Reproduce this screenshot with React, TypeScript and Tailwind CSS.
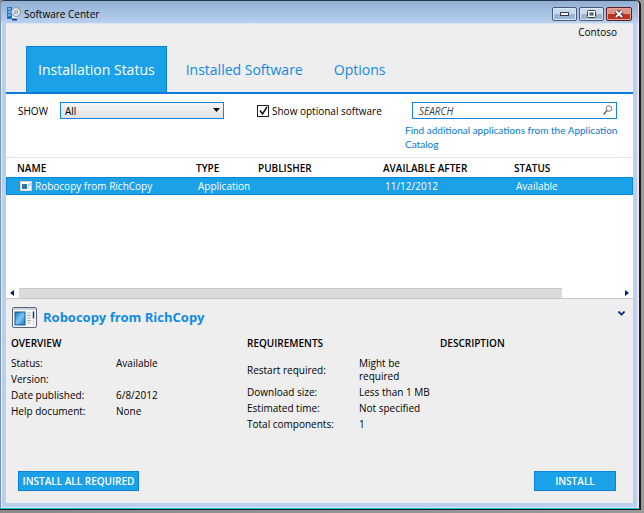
import React from "react";

const TABS = ["Installed Software", "Options"];

const OVERVIEW = [
  ["Status:", "Available"],
  ["Version:", ""],
  ["Date published:", "6/8/2012"],
  ["Help document:", "None"],
];

const REQUIREMENTS = [
  ["Restart required:", "Might be required"],
  ["Download size:", "Less than 1 MB"],
  ["Estimated time:", "Not specified"],
  ["Total components:", "1"],
];

const AppLogo: React.FC = () => (
  <svg width="14" height="14" viewBox="0 0 14 14" aria-hidden="true">
    <rect x="0" y="0" width="5" height="12" fill="#1675d1" />
    <path d="M1 2h3M1 5h3M1 8h3" stroke="#bfe4ff" />
    <rect x="5" y="7" width="5" height="6" fill="#f4f8fc" />
    <path d="M5 12.500h5" stroke="#163f97" strokeWidth="2" />
    <circle cx="9" cy="5" r="4.500" fill="#dce3ea" stroke="#8793a5" />
    <circle cx="9" cy="5" r="1.500" fill="#fff" stroke="#8b96a8" />
    <path d="M6 8l3-3 2-3" stroke="#d4b994" fill="none" />
  </svg>
);

const ProgramIcon: React.FC = () => (
  <svg width="25" height="21" viewBox="0 0 25 21" aria-hidden="true">
    <defs>
      <linearGradient id="pane" x1="0" y1="0" x2="1" y2="1">
        <stop offset="0" stopColor="#1677bd" />
        <stop offset="0.500" stopColor="#7dc6ee" />
        <stop offset="1" stopColor="#1676c0" />
      </linearGradient>
    </defs>
    <rect x="0.500" y="0.500" width="24" height="20" rx="1.500" fill="#fafbfd" stroke="#59647a" />
    <path d="M1 2h23" stroke="#cbd3df" strokeWidth="2" />
    <rect x="3" y="5" width="10" height="13" fill="url(#pane)" stroke="#17569a" />
    <path d="M15 6h4M15 8.500h4M15 11h4M15 13.500h4M15 16h4" stroke="#a9adb5" />
    <path d="M21.500 4.500v7" stroke="#1c376f" strokeWidth="1.500" />
    <path d="M21.500 13v5" stroke="#cbd0d8" />
  </svg>
);

const RowIcon: React.FC = () => (
  <svg width="12" height="10" viewBox="0 0 12 10" aria-hidden="true">
    <rect x="0.500" y="0.500" width="11" height="9" fill="#fff" stroke="#e9cdb8" />
    <rect x="2" y="3" width="5" height="5" fill="#2874bd" />
    <path d="M8.500 3v5" stroke="#d5d5dc" />
    <path d="M10 2v3" stroke="#8ea3c4" />
  </svg>
);

const TitleBar: React.FC = () => (
  <header className="flex h-[22px] shrink-0 items-start justify-between rounded-t-[4px] bg-linear-to-b from-[#91afd3] to-[#b9d0ee] pl-[6px] pr-[6px]">
    <div className="flex items-center gap-[3px] pt-[5px]">
      <AppLogo />
      <h1 className="text-[10px] leading-4 text-black">Software Center</h1>
    </div>
    <div className="flex gap-[2px] pt-[6px]">
      <button aria-label="Minimize" className="flex h-[14px] w-[25px] items-center justify-center rounded-[2px] border border-[#46597a] bg-linear-to-b from-[#c8daee] from-50% to-[#9cb5d4] to-50% inset-ring inset-ring-[#dce9f7]">
        <svg width="9" height="4" viewBox="0 0 9 4">
          <rect x="0.500" y="0.500" width="8" height="3" fill="#fff" stroke="#35394b" />
        </svg>
      </button>
      <button aria-label="Maximize" className="flex h-[14px] w-[25px] items-center justify-center rounded-[2px] border border-[#46597a] bg-linear-to-b from-[#c8daee] from-50% to-[#9cb5d4] to-50% inset-ring inset-ring-[#dce9f7]">
        <svg width="9" height="8" viewBox="0 0 9 8">
          <rect x="0.500" y="0.500" width="8" height="7" rx="1" fill="#fff" stroke="#35394b" />
          <rect x="3" y="3" width="3" height="2" fill="#8fa9ca" stroke="#35394b" />
        </svg>
      </button>
      <button aria-label="Close" className="flex h-[14px] w-[26px] items-center justify-center rounded-[2px] border border-[#591f25] bg-linear-to-b from-[#df9384] from-50% to-[#bb3420] to-50% inset-ring inset-ring-[#e9a395]">
        <svg width="10" height="8" viewBox="0 0 10 8">
          <path d="M2 1l6 6M8 1l-6 6" stroke="#4b2737" strokeWidth="4" />
          <path d="M2 1l6 6M8 1l-6 6" stroke="#fff" strokeWidth="2" />
        </svg>
      </button>
    </div>
  </header>
);

const Tabs: React.FC = () => (
  <div className="flex items-start justify-between border-b-2 border-[#0a78dc] bg-[#eeeeee]">
    <nav className="flex pl-5 pt-[22px] text-[14px] leading-[22px] text-[#0f8ae6]">
      <button className="border border-b-0 border-[#0a7fe0] bg-[#1ba1e8] px-[11px] pb-[11px] pt-3 text-white">
        Installation Status
      </button>
      {TABS.map((tab) => (
        <button key={tab} className="ml-[19px] pb-[11px] pl-0 pr-3 pt-3">
          {tab}
        </button>
      ))}
    </nav>
    <span className="pr-4 text-[10px] leading-4">Contoso</span>
  </div>
);

const Filters: React.FC = () => (
  <div className="flex items-start pb-[6px] pl-3 pr-4 pt-2">
    <label htmlFor="show" className="w-[42px] pt-px text-[10px] leading-4">
      SHOW
    </label>
    <div className="relative">
      <select
        id="show"
        className="block h-[17px] w-[164px] appearance-none rounded-none border border-[#1683dc] bg-linear-to-b from-[#f5f5f5] to-[#e2e2e5] pl-1 text-[10px] leading-[14px]"
      >
        <option>All</option>
      </select>
      <svg className="pointer-events-none absolute right-1 top-[6px]" width="7" height="4" viewBox="0 0 7 4">
        <path d="M0 0h7l-3.500 4z" fill="#111" />
      </svg>
    </div>
    <label className="ml-[33px] flex items-center gap-[3px] pt-px text-[10px] leading-4">
      <span className="relative block h-3 w-3">
        <input type="checkbox" defaultChecked className="peer block h-3 w-3 appearance-none border border-[#222] bg-white" />
        <svg className="pointer-events-none absolute left-0 top-0 hidden peer-checked:block" width="12" height="12" viewBox="0 0 12 12">
          <path d="M3 5.500l2.500 3.500L10 2" fill="none" stroke="#111" strokeWidth="1.500" />
        </svg>
      </span>
      Show optional software
    </label>
    <div className="ml-auto w-[212px]">
      <div className="relative ml-[7px]">
        <input
          type="text"
          aria-label="Search"
          placeholder="SEARCH"
          className="block h-[17px] w-full border border-[#1683dc] bg-white pl-[6px] pr-5 text-[10px] italic leading-[14px] placeholder:text-[#444]"
        />
        <svg className="pointer-events-none absolute right-1 top-[3px]" width="10" height="10" viewBox="0 0 10 10">
          <circle cx="6" cy="3.500" r="2.800" fill="#f3f8ff" stroke="#777" />
          <path d="M4 5.500l-3.500 4" stroke="#555" strokeWidth="1.200" />
        </svg>
      </div>
      <a href="#catalog" className="-mr-2 mt-1 block font-['Lato',sans-serif] text-[10px] leading-[14px] text-[#0877d2]">
        Find additional applications from the Application Catalog
      </a>
    </div>
  </div>
);

const SoftwareList: React.FC = () => (
  <div className="flex h-[142px] flex-col border-y border-b-[#c9c6cb] border-t-[#e4e4e4]">
    <table className="w-full table-fixed text-left text-[10px]">
      <thead>
        <tr className="h-[19px] leading-4 [&>th]:p-0 [&>th]:font-semibold">
          <th className="w-[190px]"><span className="pl-[11px]">NAME</span></th>
          <th className="w-[62px]">TYPE</th>
          <th className="w-[125px]">PUBLISHER</th>
          <th className="w-[131px]">AVAILABLE AFTER</th>
          <th>STATUS</th>
        </tr>
      </thead>
      <tbody>
        <tr className="h-[18px] bg-[#1ba1e8] leading-4 text-white outline outline-offset-[-1px] outline-[#0a86df]">
          <td>
            <span className="flex items-center gap-[3px] pl-[14px]">
              <RowIcon />
              Robocopy from RichCopy
            </span>
          </td>
          <td className="pl-[2px]">Application</td>
          <td></td>
          <td className="pl-[2px]">11/12/2012</td>
          <td className="pl-[2px]">Available</td>
        </tr>
      </tbody>
    </table>
    <div className="mt-auto flex h-[10px] items-center justify-between gap-1 px-1">
      <button aria-label="Scroll left">
        <svg className="block" width="4" height="6" viewBox="0 0 4 6">
          <path d="M4 0v6L0 3z" fill="#001a80" />
        </svg>
      </button>
      <div className="h-full flex-1">
        <div className="ml-px h-full w-[90%] border-t border-[#c9c6cb] bg-[#dcdadd]" />
      </div>
      <button aria-label="Scroll right">
        <svg className="block" width="4" height="6" viewBox="0 0 4 6">
          <path d="M0 0v6l4-3z" fill="#001a80" />
        </svg>
      </button>
    </div>
  </div>
);

const Details: React.FC = () => (
  <section className="flex flex-1 flex-col bg-[#eeeeee] pl-[5px] pr-2">
    <div className="flex items-start justify-between pt-[6px]">
      <div className="flex items-center gap-[6px] pl-px">
        <ProgramIcon />
        <h2 className="text-[13px] font-bold leading-6 text-[#0f8ae6]">Robocopy from RichCopy</h2>
      </div>
      <button aria-label="Collapse details" className="pt-[6px]">
        <svg className="block" width="7" height="5" viewBox="0 0 7 5">
          <path d="M0.500 0.500l3 3 3-3" fill="none" stroke="#001a80" strokeWidth="1.600" />
        </svg>
      </button>
    </div>
    <div className="flex pt-[6px] text-[10px]">
      <div className="w-[236px] shrink-0">
        <h3 className="pb-1 font-semibold leading-4">OVERVIEW</h3>
        <dl>
          {OVERVIEW.map(([label, value]) => (
            <div key={label} className="flex min-h-4 leading-4">
              <dt className="w-[105px]">{label}</dt>
              <dd>{value}</dd>
            </div>
          ))}
        </dl>
      </div>
      <div className="w-[193px] shrink-0">
        <h3 className="pb-[6px] font-semibold leading-4">REQUIREMENTS</h3>
        <dl>
          {REQUIREMENTS.map(([label, value]) => (
            <div key={label} className="flex items-center pb-[3px] leading-[13px]">
              <dt className="w-[112px]">{label}</dt>
              <dd className="w-[76px]">{value}</dd>
            </div>
          ))}
        </dl>
      </div>
      <h3 className="font-semibold leading-4">DESCRIPTION</h3>
    </div>
    <div className="mt-auto flex justify-between pb-3 pl-[7px] pr-[9px] text-[10px] font-semibold text-white">
      <button className="h-5 w-[121px] whitespace-nowrap border border-[#0a7fe0] bg-[#1ba1e8]">INSTALL ALL REQUIRED</button>
      <button className="h-5 w-[82px] border border-[#0a7fe0] bg-[#1ba1e8]">INSTALL</button>
    </div>
  </section>
);

export default function App() {
  return (
    <div className="flex min-h-screen flex-col bg-linear-to-r from-[#8b8b8b] to-[#999] pb-[3px] pr-[3px] font-['Open_Sans','Noto_Sans',sans-serif] text-black">
      <div className="flex flex-1 flex-col rounded-t-[5px] border-b border-r-2 border-[#1c1c1c]">
        <div className="flex flex-1 flex-col rounded-t-[5px] border border-b-[#12c4dc] border-l-[#7f94ae] border-r-[#f2dfec] border-t-[#26364b] bg-[#b9d1ee] inset-ring inset-ring-[#dbe8f7]">
          <TitleBar />
          <main className="mb-[5px] ml-[5px] mr-[5px] flex flex-1 flex-col border-t border-[#dce7f3] bg-white">
            <Tabs />
            <Filters />
            <SoftwareList />
            <Details />
          </main>
        </div>
      </div>
    </div>
  );
}
